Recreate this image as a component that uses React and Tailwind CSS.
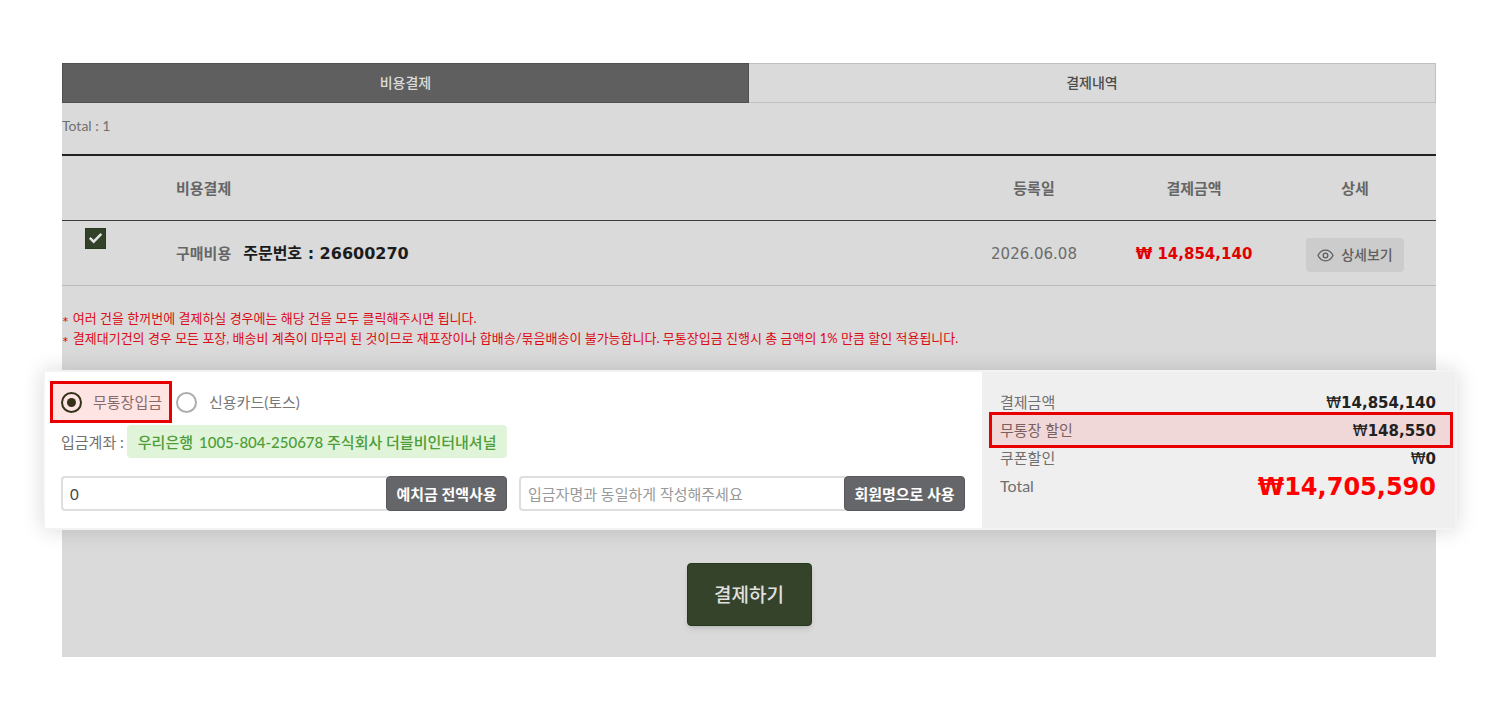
import { useState } from "react";

const columns = [
  { label: "등록일", className: "w-[160px]" },
  { label: "결제금액", className: "w-[160px]" },
  { label: "상세", className: "w-[162px]" },
];

const notices = [
  "여러 건을 한꺼번에 결제하실 경우에는 해당 건을 모두 클릭해주시면 됩니다.",
  "결제대기건의 경우 모든 포장, 배송비 계측이 마무리 된 것이므로 재포장이나 합배송/묶음배송이 불가능합니다. 무통장입금 진행시 총 금액의 1% 만큼 할인 적용됩니다.",
];

const summary = [
  { label: "결제금액", amount: "14,854,140" },
  { label: "무통장 할인", amount: "148,550", active: true },
  { label: "쿠폰할인", amount: "0" },
];

const EyeIcon = () => (
  <svg
    width="17"
    height="17"
    viewBox="0 0 17 17"
    fill="none"
    stroke="currentColor"
    strokeWidth="1.3"
    aria-hidden="true"
  >
    <path d="M1 8.5C2.6 5.2 5.3 3.2 8.5 3.2s5.9 2 7.5 5.3c-1.6 3.3-4.3 5.3-7.5 5.3S2.6 11.8 1 8.5z" />
    <circle cx="8.5" cy="8.5" r="2.3" />
  </svg>
);

const Radio = ({ checked, onChange, value }) => (
  <input
    type="radio"
    name="method"
    value={value}
    checked={checked}
    onChange={onChange}
    className="size-[21px] shrink-0 appearance-none rounded-full border-2 border-[#adadad] bg-white checked:border-[#35301a] checked:bg-[#35301a] checked:bg-clip-content checked:p-1"
  />
);

const Tabs = () => (
  <div className="flex h-10 text-sm">
    <button
      type="button"
      className="w-1/2 border border-[#505050] bg-[#5f5f5f] font-medium text-[#dcdcdc]"
    >
      비용결제
    </button>
    <button
      type="button"
      className="w-1/2 border border-l-0 border-[#c0c0c0] font-medium text-[#4c4c4c]"
    >
      결제내역
    </button>
  </div>
);

const OrderTable = () => {
  const [checked, setChecked] = useState(true);

  return (
    <table className="w-full table-fixed border-separate border-spacing-0 border-t-2 border-[#222222]">
      <thead>
        <tr className="h-[65px] text-[#666666]">
          <th className="w-[114px] border-b border-[#3c3c3c]" />
          <th className="border-b border-[#3c3c3c] text-left font-bold">비용결제</th>
          {columns.map((column) => (
            <th
              key={column.label}
              className={`${column.className} border-b border-[#3c3c3c] font-bold`}
            >
              {column.label}
            </th>
          ))}
        </tr>
      </thead>
      <tbody>
        <tr className="h-[65px]">
          <td className="border-b border-[#bababa] pt-[7px] pl-[23px] align-top">
            <label className="relative flex size-[21px]">
              <input
                type="checkbox"
                aria-label="주문 선택"
                checked={checked}
                onChange={() => setChecked(!checked)}
                className="size-[21px] appearance-none border border-[#26391f] checked:bg-[#324228]"
              />
              {checked && (
                <svg
                  viewBox="0 0 21 21"
                  fill="none"
                  stroke="#e4e4e4"
                  strokeWidth="2.4"
                  className="pointer-events-none absolute inset-0"
                >
                  <path d="M4.8 9.8l3.9 3.9 7.6-7.8" />
                </svg>
              )}
            </label>
          </td>
          <td className="border-b border-[#bababa] pt-[2px] font-bold">
            <span className="mr-3 text-[#666666]">구매비용</span>
            <span className="font-['DejaVu_Sans','Noto_Sans_CJK_KR',sans-serif] text-base text-[#1c1c1c]">
              주문번호 : 26600270
            </span>
          </td>
          <td className="border-b border-[#bababa] pt-[2px] text-center font-['DejaVu_Sans',sans-serif] text-[#6c6c6c]">
            2026.06.08
          </td>
          <td className="border-b border-[#bababa] pt-[2px] text-center font-['DejaVu_Sans',sans-serif] font-bold text-[#e00000]">
            ₩ 14,854,140
          </td>
          <td className="border-b border-[#bababa] pt-1 text-center">
            <button
              type="button"
              className="inline-flex h-[34px] items-center gap-[7px] rounded bg-[#cccccc] px-[11px] align-middle text-sm font-medium text-[#5f5f5f]"
            >
              <EyeIcon />
              상세보기
            </button>
          </td>
        </tr>
      </tbody>
    </table>
  );
};

const PaymentForm = () => {
  const [method, setMethod] = useState("bank");
  const [deposit, setDeposit] = useState("0");
  const [name, setName] = useState("");

  return (
    <div className="flex-1 bg-white pt-[9px] pr-[17px] pb-[17px] pl-4">
      <div className="flex gap-1 text-[#777777]">
        <label className="-ml-[11px] flex h-[42px] items-center gap-[11px] border-3 border-[#e80000] bg-[#ffe4e4] pr-[7px] pl-2 text-[#876b6b]">
          <Radio
            value="bank"
            checked={method === "bank"}
            onChange={() => setMethod("bank")}
          />
          무통장입금
        </label>
        <label className="flex h-[42px] items-center gap-3">
          <Radio
            value="card"
            checked={method === "card"}
            onChange={() => setMethod("card")}
          />
          신용카드(토스)
        </label>
      </div>

      <div className="mt-[2px] flex items-center gap-[3px] text-[#707070]">
        <span>입금계좌 :</span>
        <span className="flex h-[33px] items-center gap-[6px] rounded bg-[#dff4d8] px-[11px] font-medium text-[#4f9c38]">
          우리은행 <span>1005-804-250678 주식회사 더블비인터내셔널</span>
        </span>
      </div>

      <div className="mt-[18px] flex gap-3">
        <div className="flex h-[35px] flex-1">
          <input
            type="text"
            aria-label="예치금"
            value={deposit}
            onChange={(e) => setDeposit(e.target.value)}
            className="min-w-0 flex-1 rounded-l border-2 border-r-0 border-[#dedede] px-[7px] text-[#444444]"
          />
          <button
            type="button"
            className="-ml-px w-[121px] rounded border border-[#58585c] bg-[#65666a] font-bold text-white"
          >
            예치금 전액사용
          </button>
        </div>
        <div className="flex h-[35px] flex-1">
          <input
            type="text"
            aria-label="입금자명"
            placeholder="입금자명과 동일하게 작성해주세요"
            value={name}
            onChange={(e) => setName(e.target.value)}
            className="min-w-0 flex-1 rounded-l border-2 border-r-0 border-[#dedede] px-[7px] placeholder:text-[#999999]"
          />
          <button
            type="button"
            className="-ml-px w-[121px] rounded border border-[#58585c] bg-[#65666a] font-bold text-white"
          >
            회원명으로 사용
          </button>
        </div>
      </div>
    </div>
  );
};

const Summary = () => (
  <dl className="w-[473px] bg-[#efefef] pt-4 pr-[19px] pl-[18px] text-[#707070]">
    {summary.map((row) => (
      <div
        key={row.label}
        className={
          row.active
            ? "-my-1 -mr-[17px] -ml-[11px] flex h-9 items-center justify-between border-3 border-[#e80000] bg-[#f0d8d8] pr-[14px] pl-2 text-[#7a6060]"
            : "flex h-7 items-center justify-between"
        }
      >
        <dt>{row.label}</dt>
        <dd className="pt-[2px] font-['DejaVu_Sans',sans-serif] text-[#222222]">
          ₩<b>{row.amount}</b>
        </dd>
      </div>
    ))}
    <div className="flex h-7 items-center justify-between">
      <dt className="text-base">Total</dt>
      <dd className="pt-[2px] font-['DejaVu_Sans',sans-serif] text-2xl font-bold text-[#ff0000]">
        ₩14,705,590
      </dd>
    </div>
  </dl>
);

const App = () => {
  return (
    <main className="bg-white pt-[63px] pr-16 pb-16 pl-[62px] font-['Lato','Noto_Sans_CJK_KR',sans-serif] text-[15px] leading-5">
      <div className="bg-[#dadada] pb-[31px]">
        <Tabs />
        <p className="flex h-[51px] items-center pb-[6px] text-sm text-[#707070]">Total : 1</p>
        <OrderTable />

        <ul className="pt-[22px] text-[13px] text-[#dc0a14]">
          {notices.map((notice) => (
            <li key={notice} className="flex h-5 gap-1">
              <span className="pt-1 text-base leading-5">*</span>
              {notice}
            </li>
          ))}
        </ul>

        {/* raised payment panel, wider than the page behind it */}
        <section className="-mr-[21px] -ml-[19px] mt-[22px] flex border-2 border-[#f3f3f3] shadow-[0_0_20px_rgba(0,0,0,0.15)]">
          <PaymentForm />
          <Summary />
        </section>

        <div className="mt-[33px] flex justify-center">
          <button
            type="button"
            className="h-[63px] w-[125px] rounded border border-[#26391f] bg-[#344329] text-[19px] font-medium text-[#e0e0e0] shadow-md"
          >
            결제하기
          </button>
        </div>
      </div>
    </main>
  );
};

export default App;
